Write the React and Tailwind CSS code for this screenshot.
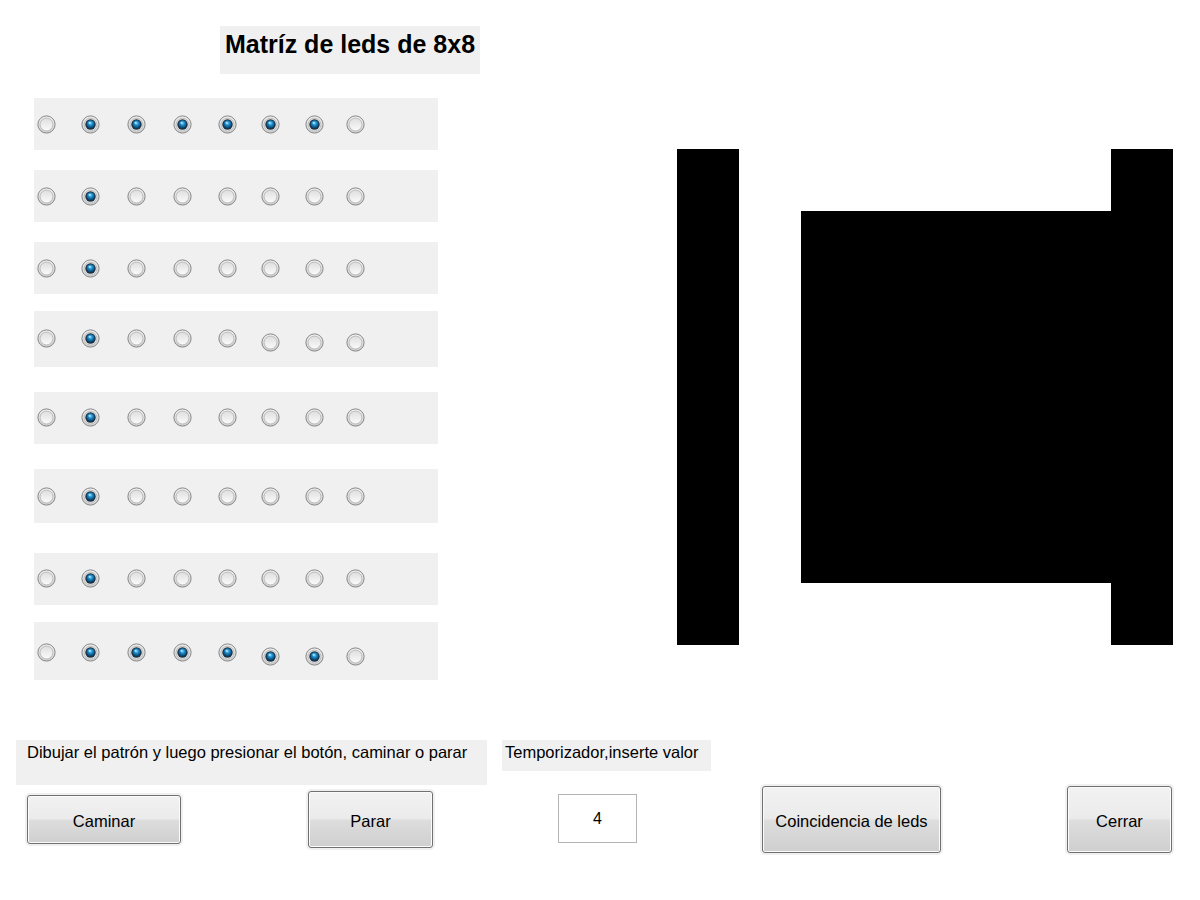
import { useId } from "react";

// horizontal margins between the radios of a row (same for every row)
const COL_ML = ["ml-[3px]", "ml-[25px]", "ml-[27px]", "ml-[27px]", "ml-[26px]", "ml-[24px]", "ml-[25px]", "ml-[22px]"];

const ROWS = [
  { mt: "mt-[24px]", h: "h-[52px]", on: [0, 1, 1, 1, 1, 1, 1, 0], off: ["mt-[17px]", "mt-[17px]"] },
  { mt: "mt-[20px]", h: "h-[52px]", on: [0, 1, 0, 0, 0, 0, 0, 0], off: ["mt-[17px]", "mt-[17px]"] },
  { mt: "mt-[20px]", h: "h-[52px]", on: [0, 1, 0, 0, 0, 0, 0, 0], off: ["mt-[17px]", "mt-[17px]"] },
  { mt: "mt-[17px]", h: "h-[56px]", on: [0, 1, 0, 0, 0, 0, 0, 0], off: ["mt-[18px]", "mt-[22px]"] },
  { mt: "mt-[25px]", h: "h-[52px]", on: [0, 1, 0, 0, 0, 0, 0, 0], off: ["mt-[16px]", "mt-[16px]"] },
  { mt: "mt-[25px]", h: "h-[54px]", on: [0, 1, 0, 0, 0, 0, 0, 0], off: ["mt-[18px]", "mt-[18px]"] },
  { mt: "mt-[30px]", h: "h-[52px]", on: [0, 1, 0, 0, 0, 0, 0, 0], off: ["mt-[16px]", "mt-[16px]"] },
  { mt: "mt-[17px]", h: "h-[58px]", on: [0, 1, 1, 1, 1, 1, 1, 0], off: ["mt-[21px]", "mt-[25px]"] },
];

// led preview, 1 = black
const LEDS = [
  [1, 0, 0, 0, 0, 0, 0, 1],
  [1, 0, 1, 1, 1, 1, 1, 1],
  [1, 0, 1, 1, 1, 1, 1, 1],
  [1, 0, 1, 1, 1, 1, 1, 1],
  [1, 0, 1, 1, 1, 1, 1, 1],
  [1, 0, 1, 1, 1, 1, 1, 1],
  [1, 0, 1, 1, 1, 1, 1, 1],
  [1, 0, 0, 0, 0, 0, 0, 1],
];

function Radio({ checked, className }) {
  const id = useId().replace(/:/g, "");
  return (
    <svg width="19" height="19" viewBox="0 0 19 19" className={`shrink-0 ${className}`}>
      <defs>
        <linearGradient id={`o${id}`} x1="0" y1="0" x2="0" y2="1">
          <stop offset="0" stopColor="#f2f2f2" />
          <stop offset="1" stopColor="#cdcdcd" />
        </linearGradient>
        <linearGradient id={`i${id}`} x1="0" y1="0" x2="0" y2="1">
          <stop offset="0" stopColor="#dedede" />
          <stop offset="1" stopColor="#fbfbfb" />
        </linearGradient>
        <radialGradient id={`b${id}`} cx="0.5" cy="0.35" r="0.6">
          <stop offset="0" stopColor="#6fd0ff" />
          <stop offset="0.45" stopColor="#1a86c4" />
          <stop offset="1" stopColor="#08395e" />
        </radialGradient>
      </defs>
      <circle cx="9.5" cy="9.5" r="8.6" fill={`url(#o${id})`} stroke="#868686" strokeWidth="1" />
      <circle cx="9.5" cy="9.5" r="6.4" fill={`url(#i${id})`} stroke="#b5b5b5" strokeWidth="0.8" />
      {checked ? (
        <>
          <circle cx="9.5" cy="9.5" r="5.2" fill="#1f2f3d" />
          <circle cx="9.5" cy="9.5" r="4.2" fill={`url(#b${id})`} />
          <circle cx="8.6" cy="7.8" r="1.1" fill="#bfeaff" opacity="0.8" />
        </>
      ) : null}
    </svg>
  );
}

function WinButton({ children, className }) {
  return (
    <button
      className={`flex items-center justify-center pt-[3px] border border-[#707070] rounded-[3px] bg-[linear-gradient(to_bottom,#f2f2f2_0%,#ebebeb_48%,#dddddd_52%,#cfcfcf_100%)] shadow-[0_0_0_2px_#f0f0f0,inset_0_0_0_1px_#fbfbfb] text-[16.5px] text-black ${className}`}
    >
      {children}
    </button>
  );
}

export default function App() {
  return (
    <div className="w-[1200px] h-[900px] bg-white overflow-hidden font-['Liberation_Sans',Arial,sans-serif] text-black">
      <div className="flex pt-[26px]">
        {/* radio matrix */}
        <div className="w-[677px] shrink-0">
          <div className="ml-[220px] w-[260px] h-[48px] bg-[#f0f0f0] pt-[3px] text-center text-[25px] leading-[30px] font-bold">
            Matríz de leds de 8x8
          </div>
          {ROWS.map((row, r) => (
            <div key={r} className={`flex items-start ml-[34px] w-[404px] bg-[#f0f0f0] ${row.mt} ${row.h}`}>
              {row.on.map((v, c) => (
                <Radio key={c} checked={v === 1} className={`${COL_ML[c]} ${c < 5 ? row.off[0] : row.off[1]}`} />
              ))}
            </div>
          ))}
        </div>

        {/* led preview */}
        <div className="mt-[123px] grid grid-cols-8 w-[496px] h-[496px]">
          {LEDS.flat().map((v, i) => (
            <div key={i} className={v ? "bg-black" : "bg-white"} />
          ))}
        </div>
      </div>

      {/* labels */}
      <div className="flex items-start mt-[60px]">
        <div className="ml-[16px] w-[471px] h-[45px] bg-[#f0f0f0] pt-[2px] pl-[11px] text-[16.5px] leading-[20px] whitespace-nowrap">
          Dibujar el patrón y luego presionar el botón, caminar o parar
        </div>
        <div className="ml-[15px] w-[209px] h-[31px] bg-[#f0f0f0] pt-[2px] pl-[3px] text-[16.5px] leading-[20px] whitespace-nowrap">
          Temporizador,inserte valor
        </div>
      </div>

      {/* controls */}
      <div className="flex items-start mt-[1px]">
        <WinButton className="ml-[27px] mt-[9px] w-[154px] h-[49px]">Caminar</WinButton>
        <WinButton className="ml-[127px] mt-[5px] w-[125px] h-[57px]">Parar</WinButton>
        <div className="ml-[125px] mt-[8px] w-[79px] h-[49px] border border-[#b4b4b4] bg-white flex items-center justify-center text-[16px]">
          4
        </div>
        <WinButton className="ml-[125px] w-[179px] h-[67px]">Coincidencia de leds</WinButton>
        <WinButton className="ml-[126px] w-[105px] h-[67px]">Cerrar</WinButton>
      </div>
    </div>
  );
}
